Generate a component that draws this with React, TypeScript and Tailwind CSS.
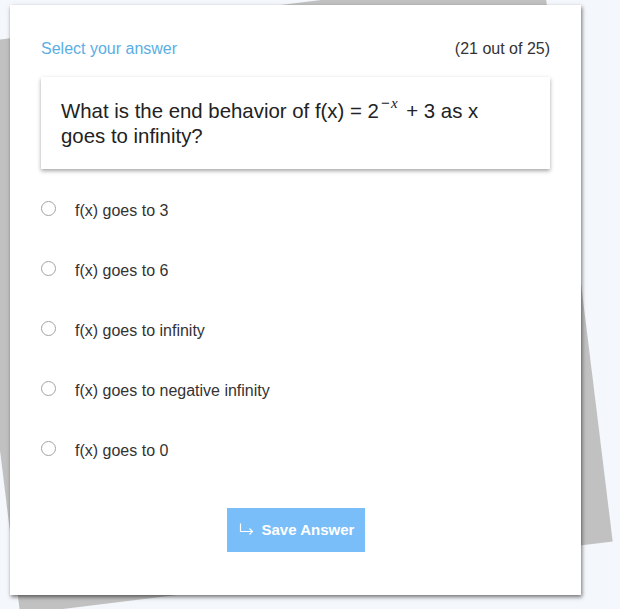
import { useState } from "react";

const options = [
  "f(x) goes to 3",
  "f(x) goes to 6",
  "f(x) goes to infinity",
  "f(x) goes to negative infinity",
  "f(x) goes to 0",
];

export default function App() {
  const [selected, setSelected] = useState<number | null>(null);

  return (
    <div className="relative w-[620px] h-[609px] overflow-hidden bg-[#f4f7fb] pl-[10px] pt-[5px] font-['Liberation_Sans',Arial,sans-serif]">
      {/* tilted sheet behind the card */}
      <div className="absolute left-[-17px] top-[7px] w-[597px] h-[573px] bg-[#c1c1c1] -rotate-[7deg]" />

      <div className="relative w-[571px] h-[590px] bg-white shadow-[1px_2px_4px_rgba(0,0,0,0.55)] px-[31px] pt-[32px]">
        <div className="flex items-center justify-between leading-5">
          <span className="text-base text-[#5aaee4]">Select your answer</span>
          <span className="text-base text-[#333]">(21 out of 25)</span>
        </div>

        {/* Question */}
        <div className="mt-4 bg-white py-5 pl-5 pr-[48px] shadow-[0_2px_4px_rgba(0,0,0,0.35)] text-[20.4px] leading-[25px] text-[#222]">
          What is the end behavior of f(x) = 2
          <sup className="relative -top-[2px] ml-[1px] mr-[3px] text-[15px] align-super leading-none">
            <span className="inline-block w-[11px] text-center">−</span>
            <span className="font-['Liberation_Serif',serif] italic">x</span>
          </sup>{" "}
          + 3 as x goes to infinity?
        </div>

        {/* Options */}
        <div className="mt-[32px] flex flex-col gap-[41px]">
          {options.map((opt, i) => (
            <label key={opt} className="flex items-start cursor-pointer" onClick={() => setSelected(i)}>
              <span className="w-[15px] h-[15px] rounded-full border border-[#a3a3a3] bg-white flex items-center justify-center">
                {selected === i && <span className="w-[7px] h-[7px] rounded-full bg-[#3b82f6]" />}
              </span>
              <span className="ml-[19px] text-base leading-[19px] text-[#333]">{opt}</span>
            </label>
          ))}
        </div>

        {/* Save */}
        <div className="mt-[48px] flex justify-center">
          <button className="h-[44px] w-[138px] bg-[#79bdf9] text-white font-bold text-[15px] flex items-center pl-3 gap-2">
            <svg width="15" height="12" viewBox="0 0 15 12" fill="none" stroke="white" strokeWidth="1.2" className="-translate-y-px">
              <path d="M1.5 0.5V8.5H13.5" />
              <path d="M10.5 5.5L13.5 8.5L10.5 11.5" />
            </svg>
            Save Answer
          </button>
        </div>
      </div>
    </div>
  );
}
